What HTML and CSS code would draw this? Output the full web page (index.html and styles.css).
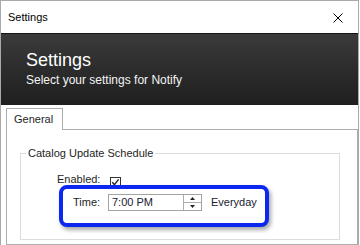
FILE: index.html
```html
<!DOCTYPE html>
<html>
<head>
<meta charset="utf-8">
<link rel="stylesheet" href="styles.css">
</head>
<body>
<div class="window">
  <div class="titlebar">
    <span class="title">Settings</span>
    <svg class="close" width="10" height="10" viewBox="0 0 10 10"><path d="M0.5 0.5 L9.5 9.5 M9.5 0.5 L0.5 9.5" stroke="#000" stroke-width="1" fill="none"/></svg>
  </div>
  <div class="header">
    <div class="h-title">Settings</div>
    <div class="h-sub">Select your settings for Notify</div>
  </div>
  <div class="tabstrip">
    <div class="tab">General</div>
  </div>
  <div class="panel">
    <fieldset class="group">
      <legend>Catalog Update Schedule</legend>
      <div class="enabled-row">
        <span class="lbl-enabled">Enabled:</span>
        <svg class="check" width="11" height="11" viewBox="0 0 11 11"><rect x="0.5" y="0.5" width="10" height="10" fill="#fff" stroke="#333"/><path d="M2.3 5.2 L4.4 7.6 L8.6 2.4" stroke="#222" stroke-width="1.4" fill="none"/></svg>
      </div>
      <div class="highlight">
        <div class="time-row">
          <span class="lbl-time">Time:</span>
          <div class="timebox">
            <span class="timeval">7:00 PM</span>
            <div class="spinner">
              <div class="spin up"><svg width="5" height="3" viewBox="0 0 5 3"><path d="M2.5 0 L5 3 L0 3 Z" fill="#222"/></svg></div>
              <div class="spin down"><svg width="5" height="3" viewBox="0 0 5 3"><path d="M0 0 L5 0 L2.5 3 Z" fill="#222"/></svg></div>
            </div>
          </div>
          <span class="everyday">Everyday</span>
        </div>
      </div>
    </fieldset>
  </div>
</div>
</body>
</html>
```

FILE: styles.css
```css
html, body {
  margin: 0;
  padding: 0;
  background: #fff;
}
body {
  width: 360px;
  height: 245px;
  overflow: hidden;
  font-family: "Liberation Sans", Arial, sans-serif;
  color: #1e1e1e;
}
.window {
  width: 359px;
  height: 245px;
  box-sizing: border-box;
  border: 1px solid #a9a9a9;
  border-bottom: none;
  background: #fff;
}
.titlebar {
  height: 32px;
  display: flex;
  align-items: center;
  justify-content: space-between;
  padding: 0 15px 0 7px;
  background: #fff;
}
.title {
  font-size: 11px;
  line-height: 32px;
  color: #000;
}
.close {
  display: block;
  margin-top: 2px;
}
.header {
  height: 55px;
  border-top: 1px solid #141414;
  background: linear-gradient(to bottom, #3b3b3b 0%, #2c2c2c 50%, #1f1f1f 100%);
  padding: 16px 0 0 25px;
  color: #fff;
}
.h-title {
  font-size: 18px;
  line-height: 20px;
}
.h-sub {
  font-size: 12px;
  line-height: 14px;
  margin-top: 3px;
  color: #f4f4f4;
}
.tabstrip {
  padding: 3px 0 0 5px;
  display: flex;
}
.tab {
  position: relative;
  z-index: 1;
  height: 21px;
  margin-bottom: -1px;
  padding: 0 9px 0 7px;
  border: 1px solid #acacac;
  border-bottom: none;
  background: #fff;
  font-size: 11px;
  line-height: 21px;
  color: #1e1e1e;
}
.panel {
  margin-left: 5px;
  height: 116px;
  box-sizing: border-box;
  border: 1px solid #acacac;
  background: #fff;
  overflow: hidden;
}
.group {
  margin: 16px 17px 0 13px;
  padding: 0 0 12px 0;
  border: 1px solid #dcdcdc;
  min-inline-size: 0;
}
.group legend {
  margin-left: 5px;
  padding: 0 2px;
  font-size: 11px;
  line-height: 14px;
  color: #1e1e1e;
}
.enabled-row {
  display: flex;
  align-items: flex-start;
  margin: 12px 0 0 36px;
  height: 14px;
}
.lbl-enabled {
  width: 53px;
  font-size: 11px;
  line-height: 14px;
}
.check {
  display: block;
  margin-top: 5px;
}
.highlight {
  position: relative;
  margin: -1px 0 0 38px;
  width: 210px;
  height: 42px;
  box-sizing: border-box;
  border: 4px solid #0b27f0;
  border-radius: 8px;
  box-shadow: 2px 3px 4px rgba(0, 0, 0, 0.35);
  background: #fff;
  padding: 5px 0 0 10px;
}
.time-row {
  display: flex;
  align-items: center;
  height: 17px;
}
.lbl-time {
  width: 35px;
  font-size: 11px;
  line-height: 17px;
}
.timebox {
  width: 94px;
  height: 17px;
  box-sizing: border-box;
  border: 1px solid #a3a3a3;
  display: flex;
}
.timeval {
  flex: 1;
  padding-left: 3px;
  font-size: 11px;
  line-height: 15px;
  color: #202030;
}
.spinner {
  width: 17px;
  border-left: 1px solid #acacac;
  display: flex;
  flex-direction: column;
}
.spin {
  height: 7px;
  display: flex;
  align-items: center;
  justify-content: center;
}
.spin svg {
  display: block;
}
.spin.up {
  border-bottom: 1px solid #acacac;
}
.everyday {
  margin-left: 9px;
  font-size: 11px;
  line-height: 17px;
  color: #202030;
}
```
